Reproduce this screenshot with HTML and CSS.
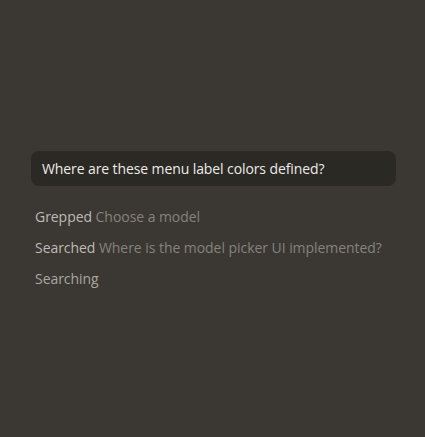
FILE: index.html
```html
<!DOCTYPE html>
<html>
<head>
<meta charset="utf-8">
<link rel="stylesheet" href="styles.css">
</head>
<body>
<div class="chat">
  <div class="prompt">Where are these menu label colors defined?</div>
  <div class="steps">
    <div class="step"><span class="verb">Grepped</span> <span class="detail">Choose a model</span></div>
    <div class="step"><span class="verb">Searched</span> <span class="detail">Where is the model picker UI implemented?</span></div>
    <div class="step"><span class="pending">Searching</span></div>
  </div>
</div>
</body>
</html>
```
FILE: styles.css
```css
html, body {
  margin: 0;
  padding: 0;
  background: #3b3833;
  height: 100%;
}
body {
  font-family: "Open Sans", "Noto Sans", sans-serif;
  font-size: 14px;
}
.chat {
  padding: 151px 29px 0 31px;
  display: flex;
  flex-direction: column;
}
.prompt {
  background: #2b2924;
  border-radius: 8px;
  height: 35px;
  box-sizing: border-box;
  padding: 0 11px;
  display: flex;
  align-items: center;
  color: #ecebe8;
  letter-spacing: -0.1px;
}
.steps {
  padding: 21px 4px 0;
  display: flex;
  flex-direction: column;
}
.step {
  height: 31px;
  line-height: 20px;
  letter-spacing: -0.05px;
}
.verb {
  color: #bdbbb6;
}
.detail {
  color: #85827d;
}
.pending {
  color: #a9a6a1;
}
```
